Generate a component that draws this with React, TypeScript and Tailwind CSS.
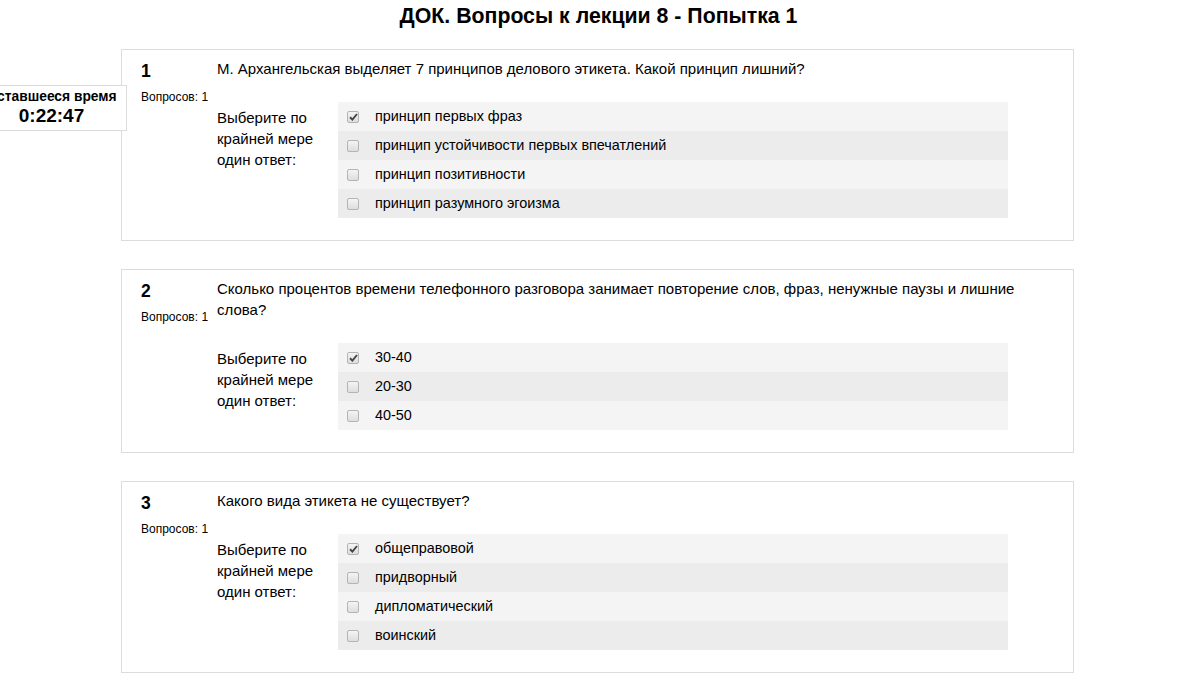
import React from "react";

type Q = { n: number; text: string; answers: string[] };

const questions: Q[] = [
  {
    n: 1,
    text: "М. Архангельская выделяет 7 принципов делового этикета. Какой принцип лишний?",
    answers: [
      "принцип первых фраз",
      "принцип устойчивости первых впечатлений",
      "принцип позитивности",
      "принцип разумного эгоизма",
    ],
  },
  {
    n: 2,
    text: "Сколько процентов времени телефонного разговора занимает повторение слов, фраз, ненужные паузы и лишние слова?",
    answers: ["30-40", "20-30", "40-50"],
  },
  {
    n: 3,
    text: "Какого вида этикета не существует?",
    answers: ["общеправовой", "придворный", "дипломатический", "воинский"],
  },
];

function Checkbox({ checked }: { checked: boolean }) {
  return (
    <span className="relative flex h-[12px] w-[12px] shrink-0 items-center justify-center rounded-[2px] border border-[#b4b4b4] bg-gradient-to-b from-[#f4f4f4] to-[#dedede]">
      {checked && (
        <svg width="9" height="8" viewBox="0 0 9 8" className="block">
          <path d="M1 4.3 L3.4 6.6 L8 1" fill="none" stroke="#444" strokeWidth="1.9" />
        </svg>
      )}
    </span>
  );
}

function Card({ q }: { q: Q }) {
  return (
    <div className="ml-[121px] w-[953px] border border-[#dcdcdc] bg-white pl-[19px] pt-[8px] pb-[22px]">
      <div className="flex">
        <div className="w-[76px] shrink-0">
          <div className="pt-[3px] text-[17.5px] font-bold leading-[20px] text-black">{q.n}</div>
          <div className="mt-[8px] text-[12px] leading-[16px] text-black">Вопросов: 1</div>
        </div>
        <div className="w-[836px]">
          <div className="text-[15px] leading-[21px] text-black">{q.text}</div>
          <div className="mt-[23px] flex">
            <div className="w-[121px] shrink-0 pt-[5px] text-[15px] leading-[21px] text-black">
              Выберите по
              <br />
              крайней мере
              <br />
              один ответ:
            </div>
            <div className="w-[670px]">
              {q.answers.map((a, i) => (
                <div
                  key={a}
                  className={
                    "flex h-[29px] items-center pl-[9px] text-[14.4px] text-black " +
                    (i % 2 === 0 ? "bg-[#f4f4f4]" : "bg-[#ececec]")
                  }
                >
                  <Checkbox checked={i === 0} />
                  <span className="ml-[16px]">{a}</span>
                </div>
              ))}
            </div>
          </div>
        </div>
      </div>
    </div>
  );
}

export default function App() {
  return (
    <div
      className="relative min-h-[693px] w-[1197px] overflow-hidden bg-white"
      style={{ fontFamily: '"Liberation Sans", Arial, sans-serif' }}
    >
      <h1 className="pt-[4px] text-center text-[21.3px] font-bold leading-[24px] text-black">
        ДОК. Вопросы к лекции 8 - Попытка 1
      </h1>
      <div className="mt-[21px] flex flex-col gap-[28px] pb-[20px]">
        {questions.map((q) => (
          <Card key={q.n} q={q} />
        ))}
      </div>
      <div className="absolute left-[-24px] top-[85px] flex h-[46px] w-[151px] flex-col items-center justify-center border border-[#dcdcdc] bg-white">
        <div className="whitespace-nowrap text-[13.8px] font-bold leading-[16px] text-black">Оставшееся время</div>
        <div className="text-[19px] font-bold leading-[22px] text-black">0:22:47</div>
      </div>
    </div>
  );
}
